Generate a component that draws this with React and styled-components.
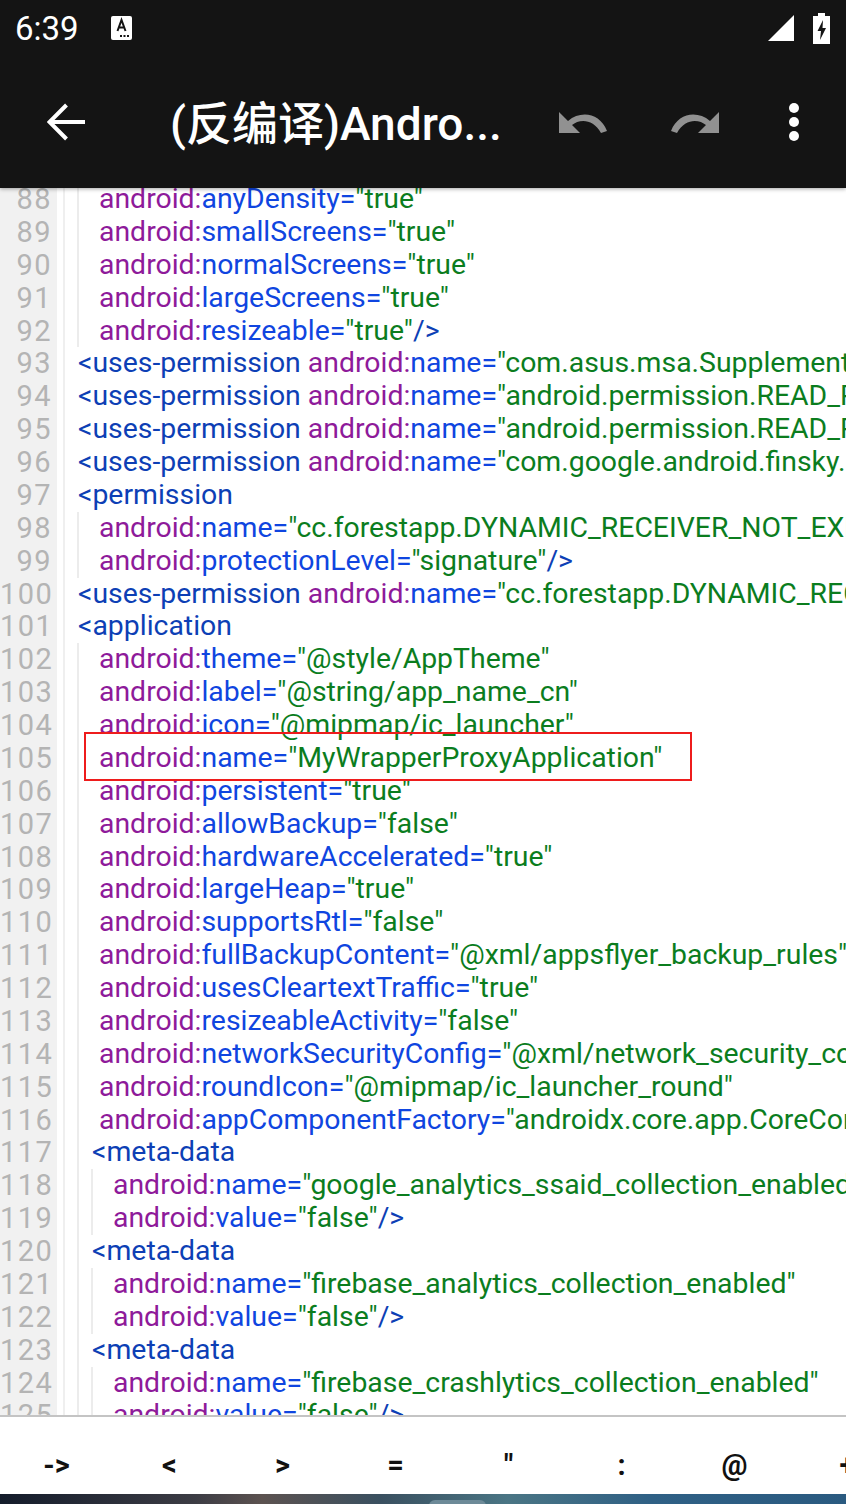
import React from "react";
import styled, { createGlobalStyle } from "styled-components";

const GlobalStyle = createGlobalStyle`
  html, body { margin: 0; padding: 0; background: #fff; }
  body { font-family: Roboto, "Noto Sans CJK SC", sans-serif; }
`;

const Screen = styled.div`
  width: 846px;
  height: 1504px;
  display: flex;
  flex-direction: column;
  overflow: hidden;
`;

const Header = styled.header`
  height: 188px;
  flex: none;
  background: #141414;
  color: #fff;
  position: relative;
  z-index: 1;
  box-shadow: 0 1px 4px rgba(0, 0, 0, 0.35);
`;

const StatusBar = styled.div`
  height: 56px;
  display: flex;
  align-items: center;
  padding: 0 16px 0 15px;
`;

const Clock = styled.span`
  font-size: 33px;
  margin-right: 32px;
`;

const StatusRight = styled.div`
  margin-left: auto;
  display: flex;
  align-items: center;
  gap: 19px;
`;

const Toolbar = styled.div`
  height: 132px;
  display: flex;
  align-items: center;
`;

const BackButton = styled.div`
  width: 170px;
  flex: none;
  padding-left: 47px;
  box-sizing: border-box;
  display: flex;
`;

const Title = styled.div`
  font-size: 46px;
  font-weight: 500;
  width: 356px;
  flex: none;
  white-space: nowrap;
  padding-bottom: 5px;
`;

const ActionIcon = styled.div`
  width: ${(p) => p.$width}px;
  flex: none;
  display: flex;
  justify-content: center;
`;

const Editor = styled.div`
  flex: 1;
  min-height: 0;
  overflow: hidden;
  background: #fff;
`;

const Lines = styled.div`
  position: relative;
  margin-top: -5px;
`;

const Row = styled.div`
  height: 32.89px;
  display: flex;
  font-size: 28.4px;
  line-height: 32.89px;
  white-space: nowrap;
`;

const Gutter = styled.div`
  width: 57px;
  flex: none;
  box-sizing: border-box;
  background: #f1f1f1;
  color: #b4b4b4;
  font-size: 29px;
  letter-spacing: 1.5px;
  text-align: right;
  padding-right: 5px;
`;

const Rule = styled.div`
  width: 6px;
  flex: none;
  border-right: 2px solid #efefef;
  box-sizing: content-box;
`;

const Guide = styled.div`
  flex: none;
  width: ${(p) => p.$width}px;
  box-sizing: border-box;
  border-left: ${(p) => (p.$line ? "2px solid #ececec" : "none")};
`;

const Code = styled.div`
  flex: 1;
  min-width: 0;
  overflow: hidden;
`;

const Tag = styled.span`color: #0d3fb5;`;
const Ns = styled.span`color: #8e1a9a;`;
const Attr = styled.span`color: #0f45e0;`;
const Value = styled.span`color: #0b7d1e;`;

const Highlight = styled.div`
  position: absolute;
  left: 84px;
  top: 549px;
  width: 608px;
  height: 49px;
  box-sizing: border-box;
  border: 2px solid #ee1c1c;
`;

const KeyBar = styled.div`
  height: 77px;
  flex: none;
  border-top: 2px solid #c4c4c4;
  background: #fff;
  display: flex;
  overflow: hidden;
  position: relative;
  z-index: 1;
`;

const Key = styled.div`
  flex: none;
  width: 113px;
  text-align: center;
  font-size: 29px;
  font-weight: 700;
  color: #111;
  line-height: 96px;
`;

const Wallpaper = styled.div`
  height: 10px;
  flex: none;
  position: relative;
  overflow: hidden;
  background: linear-gradient(90deg, #141c2b 0%, #3c3c44 23%, #5c5250 31%, #3a5060 45%, #4a7584 60%, #2f6085 77%, #2a5a80 100%);

  &::after {
    content: "";
    position: absolute;
    left: 429px;
    top: 6px;
    width: 57px;
    height: 12px;
    border-radius: 6px;
    background: #6d8a98;
  }
`;

const attr = (name, value, close) => (
  <>
    <Ns>android:</Ns>
    <Attr>{name}=</Attr>
    <Value>"{value}"</Value>
    {close && <Tag>{close}</Tag>}
  </>
);

const uses = (value) => (
  <>
    <Tag>&lt;uses-permission </Tag>
    {attr("name", value)}
  </>
);

// [line number, indent level, content]
const rows = [
  [88, 1, attr("anyDensity", "true")],
  [89, 1, attr("smallScreens", "true")],
  [90, 1, attr("normalScreens", "true")],
  [91, 1, attr("largeScreens", "true")],
  [92, 1, attr("resizeable", "true", "/>")],
  [93, 0, uses("com.asus.msa.SupplementaryDID.ACCESS")],
  [94, 0, uses("android.permission.READ_PHONE_STATE")],
  [95, 0, uses("android.permission.READ_PRIVILEGED")],
  [96, 0, uses("com.google.android.finsky.permission")],
  [97, 0, <Tag>&lt;permission</Tag>],
  [98, 1, attr("name", "cc.forestapp.DYNAMIC_RECEIVER_NOT_EXPORTED")],
  [99, 1, attr("protectionLevel", "signature", "/>")],
  [100, 0, uses("cc.forestapp.DYNAMIC_RECEIVER_NOT_EXPORTED")],
  [101, 0, <Tag>&lt;application</Tag>],
  [102, 1, attr("theme", "@style/AppTheme")],
  [103, 1, attr("label", "@string/app_name_cn")],
  [104, 1, attr("icon", "@mipmap/ic_launcher")],
  [105, 1, attr("name", "MyWrapperProxyApplication")],
  [106, 1, attr("persistent", "true")],
  [107, 1, attr("allowBackup", "false")],
  [108, 1, attr("hardwareAccelerated", "true")],
  [109, 1, attr("largeHeap", "true")],
  [110, 1, attr("supportsRtl", "false")],
  [111, 1, attr("fullBackupContent", "@xml/appsflyer_backup_rules")],
  [112, 1, attr("usesCleartextTraffic", "true")],
  [113, 1, attr("resizeableActivity", "false")],
  [114, 1, attr("networkSecurityConfig", "@xml/network_security_config")],
  [115, 1, attr("roundIcon", "@mipmap/ic_launcher_round")],
  [116, 1, attr("appComponentFactory", "androidx.core.app.CoreComponentFactory")],
  [117, 2, <Tag>&lt;meta-data</Tag>],
  [118, 3, attr("name", "google_analytics_ssaid_collection_enabled")],
  [119, 3, attr("value", "false", "/>")],
  [120, 2, <Tag>&lt;meta-data</Tag>],
  [121, 3, attr("name", "firebase_analytics_collection_enabled")],
  [122, 3, attr("value", "false", "/>")],
  [123, 2, <Tag>&lt;meta-data</Tag>],
  [124, 3, attr("name", "firebase_crashlytics_collection_enabled")],
  [125, 3, attr("value", "false", "/>")],
];

const keys = ["->", "<", ">", "=", '"', ":", "@", "+"];

const Indent = ({ level }) => {
  if (level === 0) return <Guide $width={13} />;
  return (
    <>
      <Guide $width={12} />
      {level === 1 && <Guide $line $width={22} />}
      {level === 2 && <Guide $line $width={15} />}
      {level === 3 && <Guide $line $width={14} />}
      {level === 3 && <Guide $line $width={22} />}
    </>
  );
};

export default function App() {
  return (
    <Screen>
      <GlobalStyle />
      <Header>
        <StatusBar>
          <Clock>6:39</Clock>
          <svg width="21" height="24" viewBox="0 0 21 24">
            <rect width="21" height="24" rx="2" fill="#fff" />
            <path d="M6.5 15 L10.5 4 L14.5 15 M8 11.5 H13" stroke="#141414" strokeWidth="2" fill="none" />
            <path d="M9 19h2v2H9zM12.5 19h2v2h-2zM16 19h2v2h-2z" fill="#141414" />
          </svg>
          <StatusRight>
            <svg width="26" height="26" viewBox="0 0 26 26">
              <path d="M26 0 V26 H0 Z" fill="#fff" />
            </svg>
            <svg width="17" height="31" viewBox="0 0 17 31">
              <path d="M5 0h7v3h5v28H0V3h5z" fill="#fff" />
              <path d="M10 7 L4.5 18 H8 L7 27 L13 15 H9.5 Z" fill="#141414" />
            </svg>
          </StatusRight>
        </StatusBar>
        <Toolbar>
          <BackButton>
            <svg width="38" height="38" viewBox="0 0 38 38">
              <path d="M38 19 H4 M19.5 2 L2.5 19 L19.5 36" stroke="#fff" strokeWidth="4" fill="none" />
            </svg>
          </BackButton>
          <Title>(反编译)Andro...</Title>
          <ActionIcon $width={113}>
            <svg width="48" height="21" viewBox="0 0 48 21">
              <path d="M0 0 V21 H21 L13 13 C20 7 34 6 42 21 L48 19 C41 1 22 -2 9 9 Z" fill="#919191" />
            </svg>
          </ActionIcon>
          <ActionIcon $width={111}>
            <svg width="48" height="21" viewBox="0 0 48 21">
              <path d="M48 0 V21 H27 L35 13 C28 7 14 6 6 21 L0 19 C7 1 26 -2 39 9 Z" fill="#919191" />
            </svg>
          </ActionIcon>
          <ActionIcon $width={88}>
            <svg width="10" height="38" viewBox="0 0 10 38">
              <circle cx="5" cy="5" r="5" fill="#fff" />
              <circle cx="5" cy="19" r="5" fill="#fff" />
              <circle cx="5" cy="33" r="5" fill="#fff" />
            </svg>
          </ActionIcon>
        </Toolbar>
      </Header>
      <Editor>
        <Lines>
          {rows.map(([num, level, content]) => (
            <Row key={num}>
              <Gutter>{num}</Gutter>
              <Rule />
              <Indent level={level} />
              <Code>{content}</Code>
            </Row>
          ))}
          <Highlight />
        </Lines>
      </Editor>
      <KeyBar>
        {keys.map((k) => (
          <Key key={k}>{k}</Key>
        ))}
      </KeyBar>
      <Wallpaper />
    </Screen>
  );
}
